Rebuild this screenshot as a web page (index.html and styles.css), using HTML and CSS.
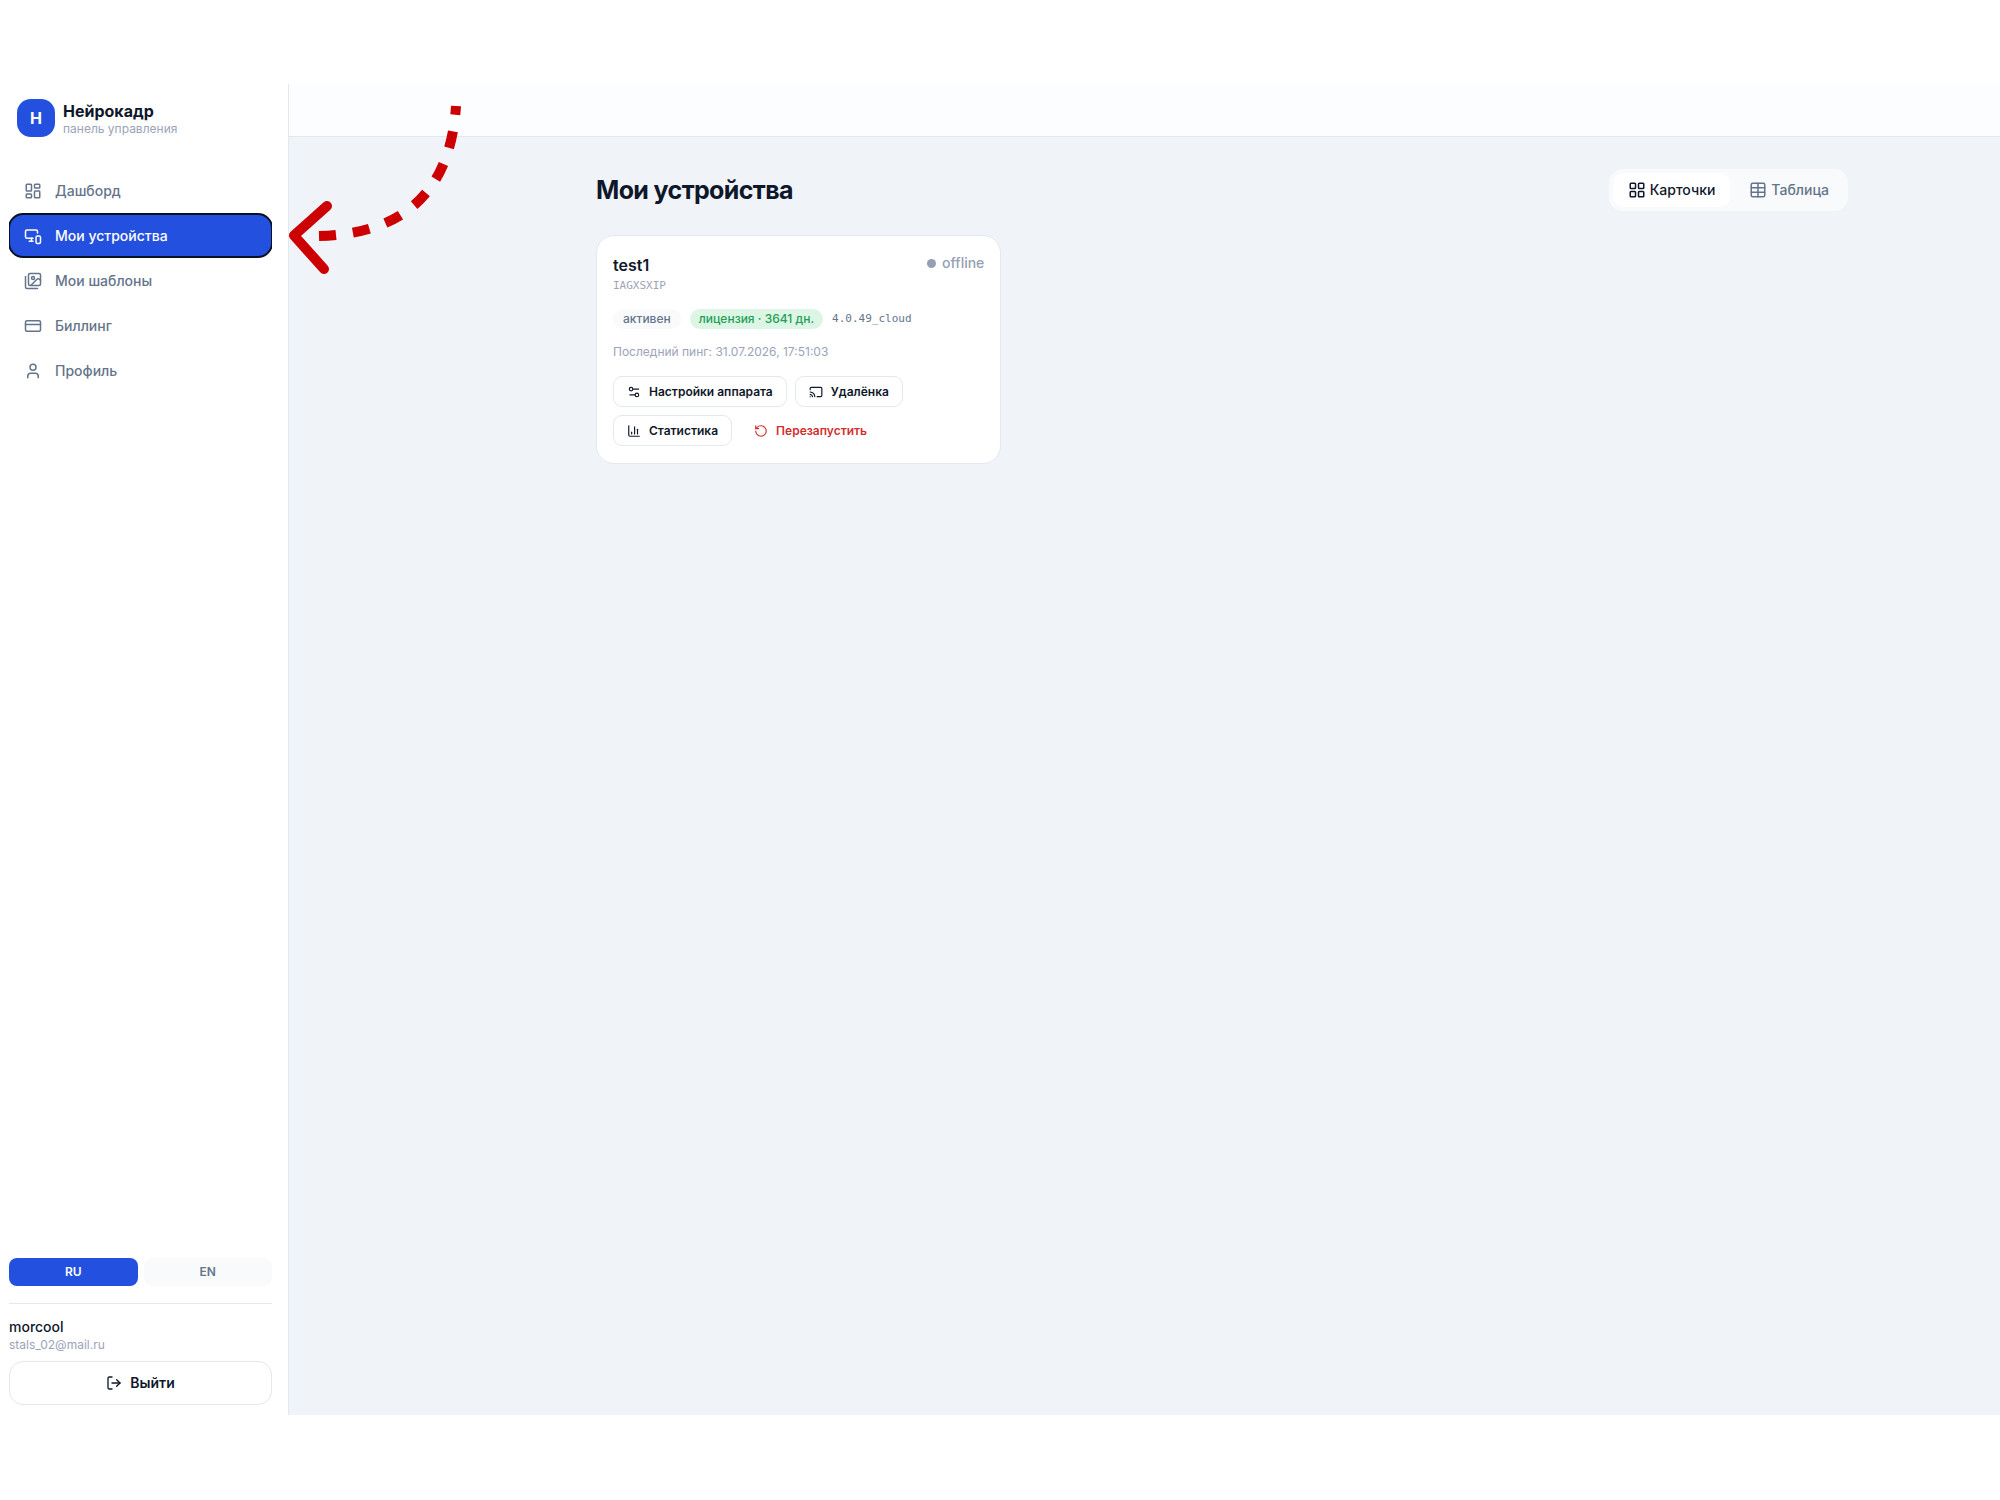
FILE: index.html
```html
<!DOCTYPE html>
<html lang="ru">
<head>
  <meta charset="UTF-8">
  <meta name="viewport" content="width=device-width, initial-scale=1">
  <title>Мои устройства - Нейрокадр</title>
  <link rel="stylesheet" href="styles.css">
</head>
<body>
  <div class="app">
    <aside class="sidebar">
      <div class="brand">
        <span class="brand-logo">Н</span>
        <div>
          <div class="brand-name">Нейрокадр</div>
          <div class="brand-sub">панель управления</div>
        </div>
      </div>

      <nav class="menu">
        <a href="#">
          <svg class="icon" viewBox="0 0 24 24"><rect x="3" y="3" width="7" height="9" rx="1"/><rect x="14" y="3" width="7" height="5" rx="1"/><rect x="14" y="12" width="7" height="9" rx="1"/><rect x="3" y="16" width="7" height="5" rx="1"/></svg>
          Дашборд
        </a>
        <a href="#" class="active">
          <svg class="icon" viewBox="0 0 24 24"><path d="M18 8V6a2 2 0 0 0-2-2H4a2 2 0 0 0-2 2v7a2 2 0 0 0 2 2h8"/><path d="M10 19v-3.96 3.15"/><path d="M7 19h5"/><rect x="16" y="12" width="6" height="10" rx="2"/></svg>
          Мои устройства
        </a>
        <a href="#">
          <svg class="icon" viewBox="0 0 24 24"><path d="m22 11-1.3-1.3a2.4 2.4 0 0 0-3.4 0L9.6 17.4"/><circle cx="12" cy="8" r="2"/><rect x="6" y="2" width="16" height="16" rx="2"/><path d="M2 6v14a2 2 0 0 0 2 2h14"/></svg>
          Мои шаблоны
        </a>
        <a href="#">
          <svg class="icon" viewBox="0 0 24 24"><rect x="2" y="5" width="20" height="14" rx="2"/><path d="M2 10h20"/></svg>
          Биллинг
        </a>
        <a href="#">
          <svg class="icon" viewBox="0 0 24 24"><circle cx="12" cy="7" r="4"/><path d="M19 21v-2a4 4 0 0 0-4-4H9a4 4 0 0 0-4 4v2"/></svg>
          Профиль
        </a>
      </nav>

      <div class="langs">
        <button type="button" class="active">RU</button>
        <button type="button">EN</button>
      </div>
      <div class="account">
        <div class="account-name">morcool</div>
        <div class="account-mail">stals_02@mail.ru</div>
        <button type="button" class="logout">
          <svg class="icon" viewBox="0 0 24 24"><path d="M9 21H5a2 2 0 0 1-2-2V5a2 2 0 0 1 2-2h4"/><path d="m16 17 5-5-5-5"/><path d="M21 12H9"/></svg>
          Выйти
        </button>
      </div>
    </aside>

    <div class="main">
      <header class="topbar"></header>
      <main class="content">
        <div class="page-head">
          <h1>Мои устройства</h1>
          <div class="views">
            <button type="button" class="active">
              <svg class="icon" viewBox="0 0 24 24"><rect x="3" y="3" width="7" height="7" rx="1"/><rect x="14" y="3" width="7" height="7" rx="1"/><rect x="14" y="14" width="7" height="7" rx="1"/><rect x="3" y="14" width="7" height="7" rx="1"/></svg>
              Карточки
            </button>
            <button type="button">
              <svg class="icon" viewBox="0 0 24 24"><rect x="3" y="3" width="18" height="18" rx="2"/><path d="M12 3v18M3 9h18M3 15h18"/></svg>
              Таблица
            </button>
          </div>
        </div>

        <div class="devices">
          <article class="card">
            <div class="card-head">
              <div>
                <h2>test1</h2>
                <div class="code">IAGXSXIP</div>
              </div>
              <span class="status">offline</span>
            </div>
            <div class="tags">
              <span class="tag">активен</span>
              <span class="tag tag-green">лицензия · 3641 дн.</span>
              <span class="version">4.0.49_cloud</span>
            </div>
            <p class="ping">Последний пинг: 31.07.2026, 17:51:03</p>
            <div class="actions">
              <button type="button">
                <svg class="icon" viewBox="0 0 24 24"><path d="M20 7h-9"/><path d="M14 17H5"/><circle cx="17" cy="17" r="3"/><circle cx="7" cy="7" r="3"/></svg>
                Настройки аппарата
              </button>
              <button type="button">
                <svg class="icon" viewBox="0 0 24 24"><path d="M2 8V6a2 2 0 0 1 2-2h16a2 2 0 0 1 2 2v12a2 2 0 0 1-2 2h-6"/><path d="M2 12a9 9 0 0 1 8 8"/><path d="M2 16a5 5 0 0 1 4 4"/><path d="M2 20h.01"/></svg>
                Удалёнка
              </button>
              <button type="button">
                <svg class="icon" viewBox="0 0 24 24"><path d="M3 3v16a2 2 0 0 0 2 2h16"/><path d="M8 17v-3"/><path d="M13 17V5"/><path d="M18 17V9"/></svg>
                Статистика
              </button>
              <button type="button" class="danger">
                <svg class="icon" viewBox="0 0 24 24"><path d="M3 12a9 9 0 1 0 9-9 9.75 9.75 0 0 0-6.74 2.74L3 8"/><path d="M3 3v5h5"/></svg>
                Перезапустить
              </button>
            </div>
          </article>
        </div>
      </main>
    </div>

    <!-- подсказка: стрелка на пункт меню -->
    <svg class="hint" viewBox="0 0 180 180">
      <path class="hint-line" d="M31 72C108 70 162 35 168 -58"/>
      <path class="hint-head" d="M39 42 6 71.500 36 105"/>
    </svg>
  </div>
</body>
</html>
```

FILE: styles.css
```css
* { box-sizing: border-box; margin: 0; padding: 0; }
body { font-family: Inter, "Noto Sans", sans-serif; background: #fff; color: #0f172a; font-size: 14px; line-height: 20px; }
button { font: inherit; color: inherit; border: none; background: none; cursor: pointer; }

.icon { width: 18px; height: 18px; flex: none; fill: none; stroke: currentColor; stroke-width: 2; stroke-linecap: round; stroke-linejoin: round; }

.app { position: relative; display: flex; min-height: 100vh; padding: 84px 0 85px; }

/* sidebar */
.sidebar { width: 289px; flex: none; display: flex; flex-direction: column; padding: 15px 16px 10px 9px; border-right: 1px solid #e2e8f0; }
.brand { display: flex; align-items: center; gap: 8px; padding-left: 8px; margin-bottom: 32px; }
.brand-logo { width: 38px; height: 38px; border-radius: 14px; background: #2450e0; color: #fff; font-weight: 700; font-size: 16px; line-height: 38px; text-align: center; }
.brand-name { padding-top: 2px; font-size: 16px; font-weight: 700; line-height: 20px; }
.brand-sub { font-size: 12px; line-height: 16px; color: #9ca3b8; }

.menu { display: flex; flex-direction: column; gap: 2px; flex: 1; overflow: hidden; }
.menu a { display: flex; align-items: center; gap: 13px; padding: 11px 15px; line-height: 21px; border-radius: 14px; color: #64748b; font-weight: 500; text-decoration: none; }
.menu a.active { background: #2450e0; color: #fff; outline: 2px solid #0b1022; outline-offset: -1px; }

.langs { display: flex; gap: 6px; padding-bottom: 17px; border-bottom: 1px solid #e2e8f0; }
.langs button { flex: 1; padding: 4px; border-radius: 8px; background: #f8fafc; color: #64748b; font-size: 12px; font-weight: 600; }
.langs button.active { background: #2450e0; color: #fff; }

.account { padding-top: 13px; }
.account-name { font-weight: 500; }
.account-mail { font-size: 12px; line-height: 16px; color: #9ca3b8; }
.logout { display: flex; align-items: center; justify-content: center; gap: 8px; width: 100%; margin-top: 8px; padding: 11px; border: 1px solid #e2e8f0; border-radius: 14px; font-weight: 600; }
.logout .icon { width: 16px; height: 16px; }

/* main */
.main { flex: 1; display: flex; flex-direction: column; min-width: 0; background: #f0f4f8; }
.topbar { height: 53px; background: #fcfdfe; border-bottom: 1px solid #e2e8f0; }
.content { padding: 32px 152px 32px 307px; }
.page-head { display: flex; align-items: center; justify-content: space-between; margin-bottom: 24px; }
h1 { font-size: 25px; font-weight: 700; line-height: 32px; letter-spacing: -0.025em; }

.views { display: flex; gap: 4px; padding: 4px; border-radius: 14px; background: #f8fafc; }
.views button { display: flex; align-items: center; gap: 4px; padding: 7px 15px; border-radius: 10px; color: #64748b; font-weight: 500; }
.views button.active { background: #fff; color: #0f172a; }

/* devices */
.devices { display: grid; grid-template-columns: repeat(3, 1fr); gap: 18px; }
.card { padding: 17px 16px; background: #fff; border: 1px solid #e2e8f0; border-radius: 18px; }
.card-head { display: flex; justify-content: space-between; align-items: flex-start; }
h2 { font-size: 16px; font-weight: 600; line-height: 24px; }
.code, .version { font-family: "DejaVu Sans Mono", monospace; font-size: 11px; line-height: 18px; color: #9ca3b8; }
.status { display: flex; align-items: center; gap: 6px; color: #94a0b3; font-weight: 500; }
.status::before { content: ""; width: 9px; height: 9px; border-radius: 50%; background: #94a0b3; }

.tags { display: flex; align-items: center; gap: 9px; margin-top: 14px; }
.tag { padding: 2px 10px; border-radius: 10px; background: #f8fafc; color: #64748b; font-size: 12px; line-height: 16px; font-weight: 500; }
.tag-green { padding: 2px 9px; background: #dcf5e5; color: #22a055; }
.version { color: #64748b; }
.ping { margin-top: 15px; font-size: 12px; line-height: 16px; color: #9ca3b8; }

.actions { display: flex; flex-wrap: wrap; gap: 8px; margin-top: 16px; }
.actions button { display: flex; align-items: center; gap: 8px; padding: 6px 13px 5px; line-height: 18px; border: 1px solid #e2e8f0; border-radius: 9px; font-size: 12px; font-weight: 600; }
.actions .icon { width: 14px; height: 14px; }
.actions .danger { border-color: transparent; color: #d32f2f; }

.hint { position: absolute; left: 288px; top: 164px; width: 180px; height: 180px; overflow: visible; fill: none; stroke: #cc0000; stroke-width: 10; pointer-events: none; }
.hint-line { stroke-dasharray: 17 17; }
.hint-head { stroke-linecap: round; stroke-linejoin: round; }
```
